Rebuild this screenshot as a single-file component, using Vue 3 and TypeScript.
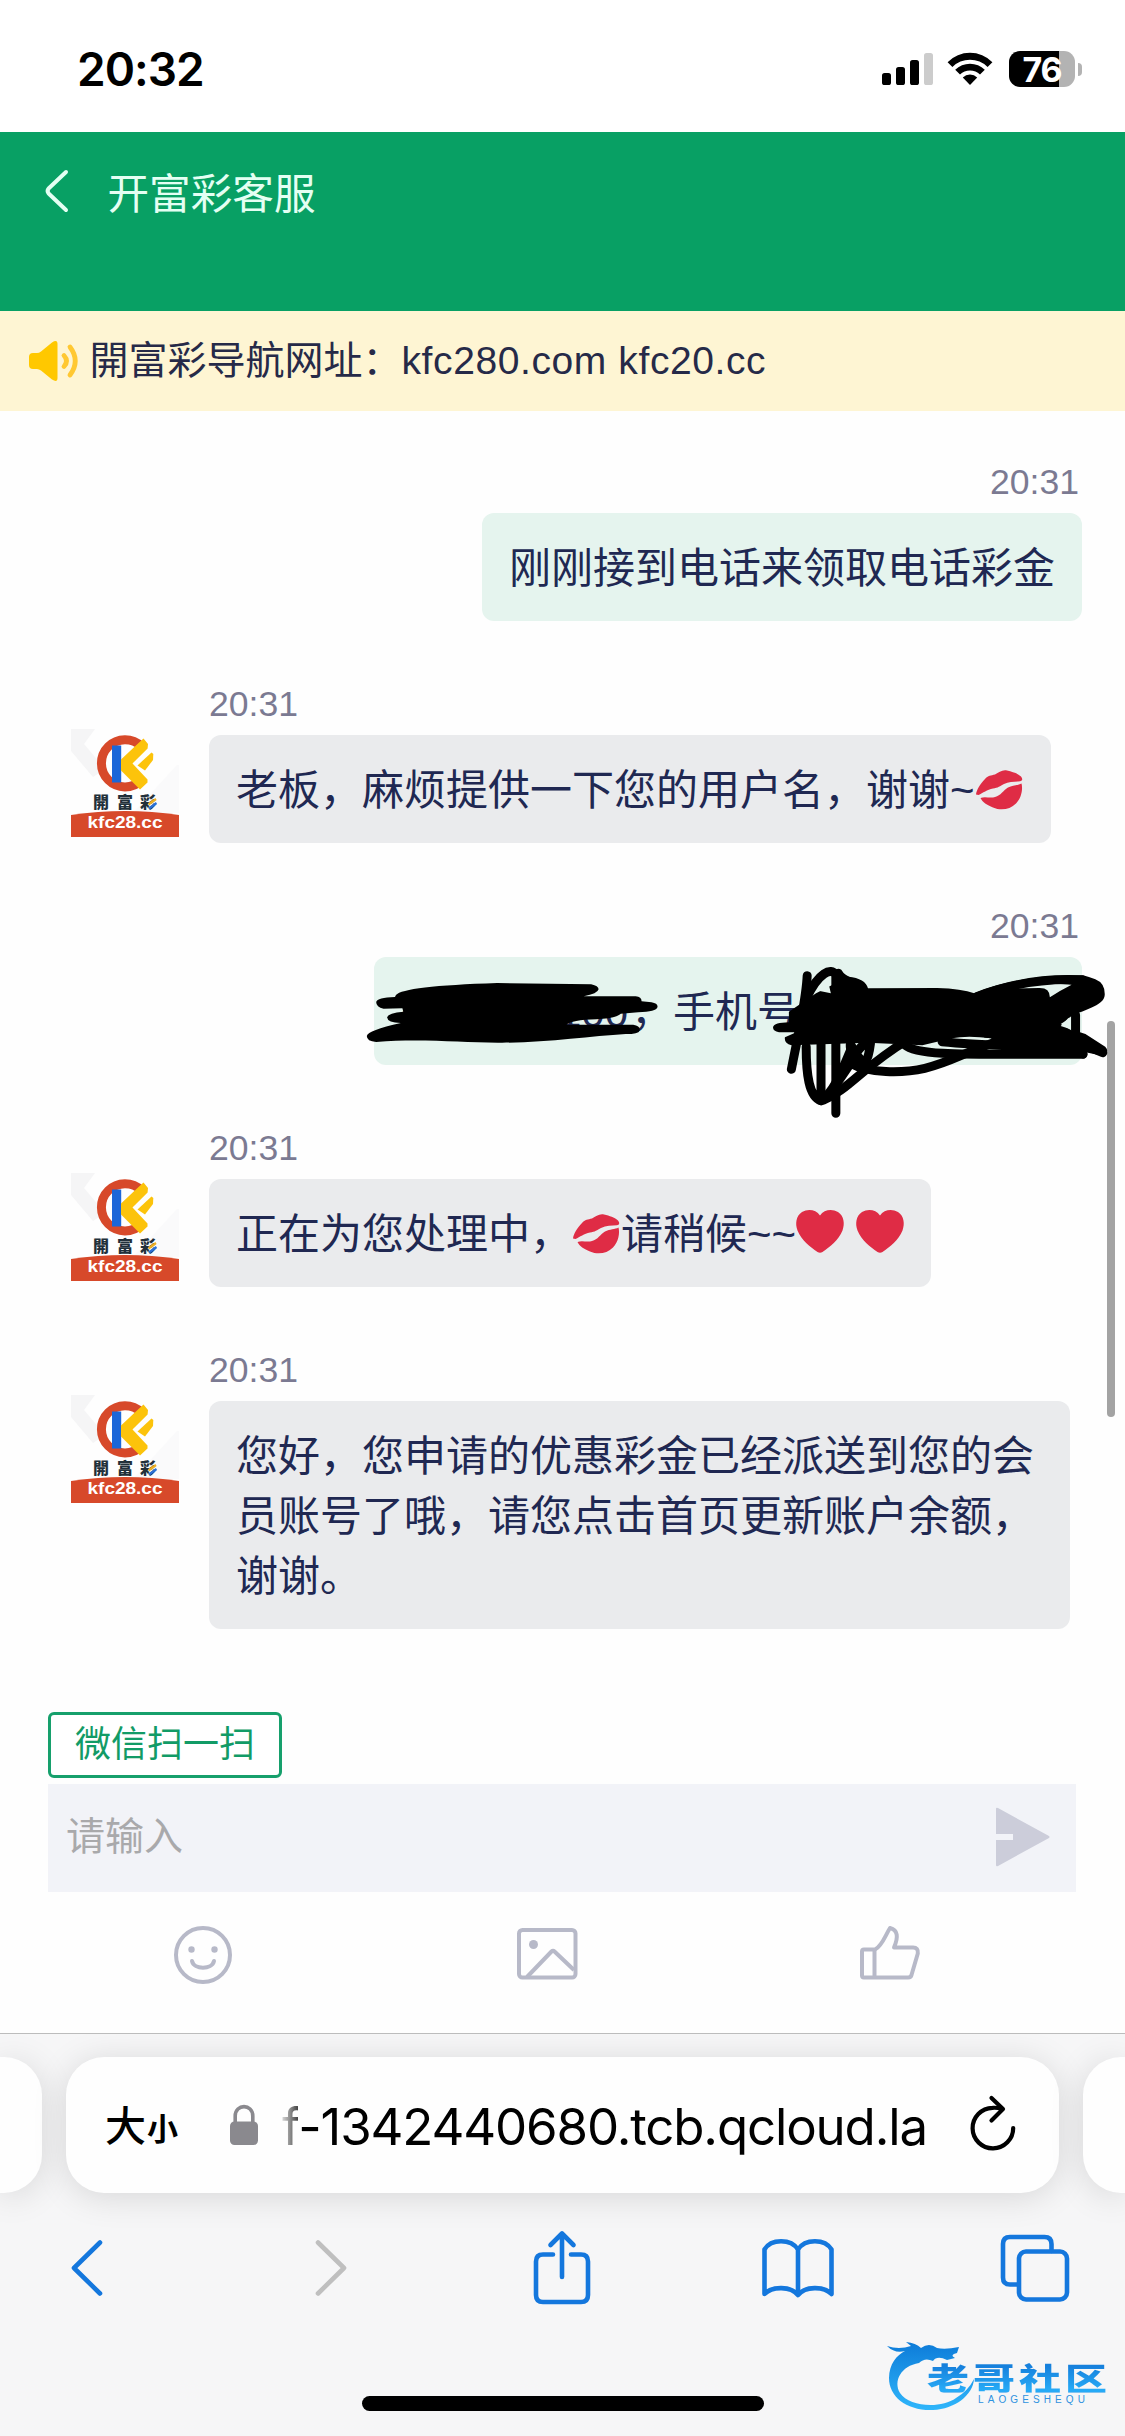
<script setup lang="ts">
type Part = { kind: 'text' | 'kiss' | 'heart' | 'gap' | 'masked'; value?: string; width?: number }
interface Message {
  id: number
  mine: boolean
  time: string
  parts: Part[]
  redacted?: boolean
}

const text = (value: string): Part => ({ kind: 'text', value })

const messages: Message[] = [
  { id: 1, mine: true, time: '20:31', parts: [text('刚刚接到电话来领取电话彩金')] },
  { id: 2, mine: false, time: '20:31', parts: [text('老板，麻烦提供一下您的用户名，谢谢~'), { kind: 'kiss' }] },
  {
    id: 3,
    mine: true,
    time: '20:31',
    redacted: true,
    parts: [
      { kind: 'masked', value: 'ow', width: 157 },
      { kind: 'masked', value: '100', width: 73 },
      text('，手机号'),
      { kind: 'gap', width: 256 },
    ],
  },
  {
    id: 4,
    mine: false,
    time: '20:31',
    parts: [text('正在为您处理中，'), { kind: 'kiss' }, text('请稍候~~'), { kind: 'heart' }, { kind: 'gap', width: 12 }, { kind: 'heart' }],
  },
  { id: 5, mine: false, time: '20:31', parts: [text('您好，您申请的优惠彩金已经派送到您的会员账号了哦，请您点击首页更新账户余额，谢谢。')] },
]
</script>

<template>
  <div class="screen">
    <div class="status">
      <span class="clock">20:32</span>
      <div class="status-icons">
        <svg class="signal" width="51" height="32" viewBox="0 0 51 32">
          <rect x="0" y="20" width="9" height="12" rx="2.6" />
          <rect x="14" y="14" width="9" height="18" rx="2.6" />
          <rect x="28" y="7" width="9" height="25" rx="2.6" />
          <rect x="42" y="0" width="9" height="32" rx="2.6" fill="#ccc" />
        </svg>
        <svg class="wifi" width="46" height="34" viewBox="0 0 46 34">
          <path d="M0.6 10.2 A31.5 31.5 0 0 1 45.4 10.2 L40.6 15 A24.8 24.8 0 0 0 5.4 15Z" />
          <path d="M8.2 17.8 A21 21 0 0 1 37.8 17.8 L33 22.6 A14.2 14.2 0 0 0 13 22.6Z" />
          <path d="M15.8 25.6 A10.2 10.2 0 0 1 30.2 25.6 L23 33Z" />
        </svg>
        <div class="battery"><span>76</span></div>
        <div class="battery-cap"></div>
      </div>
    </div>

    <header class="header">
      <svg width="24" height="42" viewBox="0 0 24 42" fill="none" stroke="#e4fff3" stroke-width="4" stroke-linecap="round" stroke-linejoin="round">
        <path d="M21 2 L3.6 18.5 Q1.6 21 3.6 23.5 L21 40" />
      </svg>
      <h1>开富彩客服</h1>
    </header>

    <div class="notice">
      <svg width="50" height="42" viewBox="0 0 50 42" fill="#ffc800">
        <path d="M4 13 H8 Q10 13 12 11.5 L23 2.5 Q28.5 -1 28.5 4 V38 Q28.5 43 23 39.5 L12 30.5 Q10 29 8 29 H4 Q0 29 0 25 V17 Q0 13 4 13Z" />
        <g fill="none" stroke="#ffc832" stroke-width="4.8" stroke-linecap="round">
          <path d="M35 15.5 Q40 21 35 26.5" />
          <path d="M41 7 Q51.500 21 41 35" />
        </g>
      </svg>
      <p>開富彩导航网址：<span>kfc280.com kfc20.cc</span></p>
    </div>

    <main class="chat">
      <div v-for="m in messages" :key="m.id" class="message" :class="{ mine: m.mine }">
        <svg v-if="!m.mine" class="avatar" width="108" height="108" viewBox="0 0 108 108">
          <rect width="108" height="108" fill="#fefefe" />
          <path d="M0 0 H24 L13 15 L34 40 L22 48 L0 22Z" fill="#f5f5f6" />
          <path d="M106 36 L62 84 H108 V36Z" fill="#fafafb" />
          <path d="M70.5 17.4 A23.6 23.6 0 1 0 70.5 51.2" fill="none" stroke="#d7492a" stroke-width="9" />
          <rect x="41" y="16.5" width="9.2" height="37" fill="#1b66d8" />
          <path d="M66.5 15 L72.5 9.500 L77 15 L76.6 19.6 L61.5 34.4 L76.5 50.5 V53.5 L69 60.5 L50 41.5 V30.5Z" fill="#fcc30b" />
          <path d="M66.5 36.4 L80.5 23.5 L82.3 25 L82 31 L74 41.5Z" fill="#fcc30b" />
          <text x="22" y="79" class="brand">開</text>
          <text x="46" y="79" class="brand">富</text>
          <text x="69" y="79" class="brand">彩</text>
          <path d="M77.5 75.5 L85 70" stroke="#f0b020" stroke-width="2.2" />
          <path d="M78 79.5 L85.5 74" stroke="#2a70d8" stroke-width="2.2" />
          <path d="M0 86 Q54 78 108 86 V108 H0Z" fill="#d7492a" />
          <text x="16.5" y="98.8" class="site" textLength="75" lengthAdjust="spacingAndGlyphs">kfc28.cc</text>
        </svg>
        <div class="body">
          <time>{{ m.time }}</time>
          <div class="bubble">
            <template v-for="(p, i) in m.parts" :key="i">
              <svg v-if="p.kind === 'kiss'" class="emoji" width="49" height="42" viewBox="0 0 49 42" fill="#df2c45">
                <path d="M1 25.5 C1.5 21 5 15 10 10 C13 6.5 16 6.5 20 5.5 C24 3.5 27 .5 32 1.5 C38 3 42 4 46 7.5 C48 10 47.5 12 45 12.3 C40 12.8 34 12.5 29 15 C25 17 23 19 18 19.5 C12 20.5 8 24 3.5 26Z" />
                <path d="M5.5 29 C10 27 15 29.5 20 28 C26 26.5 28 21.5 33 18.5 C38 16 43 16.5 46.5 14.5 C48 20 46.5 29 41 34.5 C35 40.5 26 42 18 38.5 C12 36 7.5 33.5 5.5 29Z" />
              </svg>
              <svg v-else-if="p.kind === 'heart'" class="emoji heart" width="48" height="43" viewBox="0 0 48 43" fill="#df2c45">
                <path d="M24 5.5 C28 -.5 36 -1.500 42 2 C48 6 49 13.500 46.500 20.500 C42.500 30 34 37 26.500 42 Q24 43.500 21.500 42 C14 37 5.500 30 1.500 20.500 C-1 13.500 0 6 6 2 C12 -1.500 20 -.5 24 5.500Z" />
              </svg>
              <span v-else-if="p.kind === 'text'">{{ p.value }}</span>
              <span v-else class="fixed" :style="{ width: p.width + 'px' }">{{ p.value }}</span>
            </template>
            <svg v-if="m.redacted" class="scribble" width="775" height="240" viewBox="0 0 1568 720" preserveAspectRatio="none">
              <g class="filled">
                <path d="M95 285 Q110 258 300 249 L490 253 Q505 258 505 268 Q503 281 475 289 L580 289 Q592 290 592 304 L612 307 Q626 311 624 322 Q622 335 585 337 L550 341 Q540 355 500 358 Q450 360 440 374 L575 374 Q590 377 588 392 Q586 402 560 402 C490 408 400 428 310 428 C230 429 150 415 55 426 Q36 424 36 408 Q38 391 105 369 Q78 369 77 352 Q80 338 110 335 L108 325 L70 326 Q55 322 55 306 Q57 293 93 291Z" />
                <path d="M890 335 L945 280 L1010 230 Q1045 235 1050 265 L1190 264 Q1240 266 1265 280 C1320 245 1400 223 1485 226 Q1500 232 1510 238 Q1530 250 1529 285 C1528 320 1480 330 1455 355 L1440 378 L1490 402 L1530 440 Q1540 455 1525 467 L1495 458 L1440 440 L1290 438 L1300 415 Q1250 405 1220 415 L1160 436 L1050 428 L895 436 Q880 430 882 412 L905 397 L870 397 Q857 393 858 381 Q860 368 890 367Z" />
              </g>
              <g class="cut">
                <path d="M1330 268 Q1380 250 1440 252 L1462 254 Q1440 270 1418 292 Q1418 262 1395 264 Q1360 264 1330 268Z" />
                <path d="M1440 372 L1463 350 L1463 392Z" />
                <path d="M950 272 L968 238 L975 280Z" />
              </g>
              <g class="strokes">
                <path d="M927 227 C925 300 912 380 895 508" />
                <path d="M927 290 C950 220 975 200 985 225 L985 640" />
                <path d="M925 440 C925 520 930 590 955 602 L955 430" />
                <path d="M955 602 C985 570 1000 500 1015 450 C1010 400 1020 470 1045 490" />
                <path d="M960 600 C1010 570 1040 500 1130 420" />
                <path d="M1000 500 C1040 440 1035 430 1055 430 C1050 490 1045 490 1025 485" />
                <path d="M985 555 L1015 490 C1050 520 1120 520 1165 505 C1220 485 1240 460 1310 425" />
                <path d="M1125 435 C1150 470 1260 462 1485 463" />
                <path d="M1200 425 C1300 440 1400 435 1485 450" />
                <path d="M1470 345 L1470 405 L1485 462" />
                <path d="M990 220 C1000 250 1030 240 1040 290" />
                <path d="M1270 290 C1340 250 1410 234 1485 240" />
                <path d="M1290 400 C1350 410 1440 400 1525 458" />
              </g>
            </svg>
          </div>
        </div>
      </div>
      <div class="scrollbar"></div>
    </main>

    <section class="composer">
      <button class="quick">微信扫一扫</button>
      <div class="input">
        <span>请输入</span>
        <svg width="54" height="60" viewBox="0 0 54 60" fill="#cccdda">
          <path d="M0 2 Q0 0 2 1 L53 29 Q54 30 53 31 L2 59 Q0 60 0 58 V33 H17 V27 H0Z" />
        </svg>
      </div>
      <div class="tools">
        <svg width="60" height="60" viewBox="0 0 60 60" fill="none" stroke="#b7b9c8" stroke-width="4" stroke-linecap="round">
          <circle cx="30" cy="30" r="27" />
          <path d="M19 36 C21 45 39 45 41 36" />
          <circle cx="18.500" cy="24.500" r="3.200" fill="#b7b9c8" stroke="none" />
          <circle cx="41.500" cy="24.500" r="3.200" fill="#b7b9c8" stroke="none" />
        </svg>
        <svg width="60" height="60" viewBox="0 0 60 60" fill="none" stroke="#b7b9c8" stroke-width="4" stroke-linejoin="round">
          <rect x="2" y="5" width="56.500" height="47.500" rx="3.500" />
          <path d="M10 52 L34.500 26.500 Q36 25 37.500 26.500 L57 45" />
          <circle cx="16.500" cy="19.500" r="4.500" fill="#b7b9c8" stroke="none" />
        </svg>
        <svg width="60" height="60" viewBox="0 0 60 60" fill="none" stroke="#b7b9c8" stroke-width="4" stroke-linejoin="round">
          <path d="M4 24.500 H15 C22 21 25 11 30 3 C38 5 38.500 12 34 22.500 H53 Q58.500 22.500 57.800 28.500 L51.500 50 Q51 52.500 48 52.500 H4 Q2 52.500 2 50.500 V26.500 Q2 24.500 4 24.500Z" />
          <path d="M14.500 24.500 V52.500" />
        </svg>
      </div>
    </section>

    <footer class="browser">
      <div class="address-row">
        <div class="tab-edge left"></div>
        <div class="address">
          <span class="big">大</span><span class="small">小</span>
          <svg class="lock" width="28" height="40" viewBox="0 0 28 40">
            <path d="M5.200 18 V11 C5.200 -1.500 22.800 -1.500 22.800 11 V18" fill="none" stroke="#8a898e" stroke-width="3.600" />
            <rect x="0" y="16.500" width="28" height="23.500" rx="4.500" fill="#8a898e" />
          </svg>
          <span class="url"><i>f</i>-1342440680.tcb.qcloud.la</span>
          <svg class="reload" width="46" height="56" viewBox="0 0 46 56" fill="none" stroke="#000" stroke-width="4.200" stroke-linecap="round" stroke-linejoin="round">
            <path d="M32 14 C29 13 25.500 12.600 22.500 12.800 A20.300 20.300 0 1 0 43.200 33" />
            <path d="M21.500 3 L33 14 L21.500 25.500" />
          </svg>
        </div>
        <div class="tab-edge right"></div>
      </div>
      <nav class="nav">
        <svg width="32" height="56" viewBox="0 0 32 56" class="ico"><path d="M29 2.500 L3 28 L29 53.500" /></svg>
        <svg width="32" height="56" viewBox="0 0 32 56" class="ico off"><path d="M3 2.500 L29 28 L3 53.500" /></svg>
        <svg width="56" height="74" viewBox="0 0 56 74" class="ico share">
          <path d="M19 23.500 H9 Q2 23.500 2 30.500 V64 Q2 71 9 71 H47 Q54 71 54 64 V30.500 Q54 23.500 47 23.500 H37" />
          <path d="M28 46 V2.500 M16.500 14 L28 2.500 L39.500 14" />
        </svg>
        <svg width="72" height="60" viewBox="0 0 72 60" class="ico book">
          <path d="M36 11.500 C29 .5 9 .5 2.500 11.500 V56 C10 48 29 48 36 57 C43 48 62 48 69.500 56 V11.500 C63 .5 43 .5 36 11.500 V57" />
        </svg>
        <svg width="68" height="67" viewBox="0 0 68 67" class="ico tabs">
          <path d="M16 49.500 H9 Q2 49.500 2 42.500 V9 Q2 2 9 2 H43.500 Q50.500 2 50.500 9 V16" />
          <rect x="18" y="16.500" width="48" height="48" rx="7" />
        </svg>
      </nav>
      <div class="home"></div>
      <div class="watermark">
        <svg width="94" height="70" viewBox="0 0 94 70">
          <defs>
            <linearGradient id="wave" x1="0" y1="0" x2="0" y2="1">
              <stop offset="0" stop-color="#0d7bd8" />
              <stop offset="1" stop-color="#2fb6fb" />
            </linearGradient>
          </defs>
          <path fill="url(#wave)" d="M0 5 Q12 9 24 5 L19 1 Q29 2 34 7 Q42 1 50 7 Q58 9 72 6 L70 12 Q62 14 68 17 L60 19 Q50 14 46 20 Q38 16 32 22 C14 25 6 40 13 52 C22 66 54 68 69 57 Q81 50 87 38 C86 54 68 68 46 69 C20 70 2 56 2 37 C2 23 10 14 18 10 Q8 13 0 5Z" />
        </svg>
        <strong>老哥社区</strong>
        <em>LAOGESHEQU</em>
      </div>
    </footer>
  </div>
</template>

<style>
body {
  margin: 0;
  background: #fefefe;
}
</style>

<style scoped>
.screen {
  width: 1125px;
  height: 2436px;
  overflow: hidden;
  display: flex;
  flex-direction: column;
  background: #fefefe;
  color: #202852;
  font-family: 'Liberation Sans', 'Noto Sans CJK SC', sans-serif;
  text-spacing-trim: space-all;
}
svg {
  display: block;
  flex: none;
  overflow: visible;
}
.status {
  height: 132px;
  flex: none;
  display: flex;
  justify-content: space-between;
  padding: 0 43px 0 77px;
  box-sizing: border-box;
  background: #fff;
}
.clock {
  font: 600 46px/60px Inter, sans-serif;
  color: #000;
  margin-top: 39px;
  letter-spacing: -1px;
}
.status-icons {
  display: flex;
  align-items: center;
  height: 36px;
  margin-top: 51px;
}
.wifi {
  margin-left: 14px;
}
.battery {
  width: 66px;
  height: 36px;
  margin-left: 16px;
  border-radius: 11px;
  background: linear-gradient(90deg, #000 50px, #b3b3b3 50px);
  color: #fff;
  font: 700 34px/37px Inter, sans-serif;
  text-align: center;
  letter-spacing: -1.2px;
}
.battery-cap {
  width: 4px;
  height: 13px;
  margin-left: 3px;
  border-radius: 0 5px 5px 0;
  background: #b3b3b3;
}
.header {
  height: 179px;
  flex: none;
  display: flex;
  align-items: flex-start;
  background: #08a064;
  padding: 38px 0 0 45px;
  box-sizing: border-box;
}
.header h1 {
  margin: -5px 0 0 38.5px;
  font-size: 41.6px;
  line-height: 60px;
  font-weight: 400;
  color: #e4fff3;
}
.notice {
  height: 100px;
  flex: none;
  display: flex;
  align-items: center;
  padding-left: 29px;
  background: #fef5d3;
  color: #262a48;
}
.notice p {
  margin: -1px 0 0 10.5px;
  font-size: 39px;
  line-height: 60px;
}
.notice span {
  letter-spacing: 0.6px;
}
.chat {
  position: relative;
  height: 1301px;
  flex: none;
  box-sizing: border-box;
  padding: 51px 43px 0 71px;
  display: flex;
  flex-direction: column;
  gap: 63px;
}
.message {
  display: flex;
  gap: 30px;
}
.mine {
  justify-content: flex-end;
}
.avatar {
  margin-top: 45px;
}
.brand {
  font: 900 16px 'Noto Sans CJK TC', sans-serif;
  fill: #22303a;
}
.site {
  font: 700 16px 'Liberation Sans', sans-serif;
  fill: #fff;
}
.body {
  display: flex;
  flex-direction: column;
  align-items: flex-start;
  max-width: 861px;
}
.mine .body {
  align-items: flex-end;
}
time {
  font-size: 35.6px;
  line-height: 40px;
  margin-bottom: 11px;
  color: #7b7a92;
}
.mine time {
  margin-right: 3px;
}
.bubble {
  position: relative;
  padding: 26px 27px 22px;
  border-radius: 12px;
  background: #eaebed;
  font-size: 42px;
  line-height: 60px;
}
.mine .bubble {
  background: #e5f4ee;
}
.emoji {
  display: inline-block;
  vertical-align: -6px;
}
.heart {
  vertical-align: -4px;
}
.fixed {
  display: inline-block;
  height: 60px;
  vertical-align: top;
}
.scribble {
  position: absolute;
  left: -25px;
  top: -57px;
  z-index: 1;
}
.filled {
  fill: #000;
}
.cut {
  fill: #e5f4ee;
}
.strokes {
  fill: none;
  stroke: #000;
  stroke-width: 9px;
  stroke-linecap: round;
  stroke-linejoin: round;
}
.strokes path {
  vector-effect: non-scaling-stroke;
}
.scrollbar {
  position: absolute;
  right: 10px;
  top: 610px;
  width: 8.5px;
  height: 396px;
  border-radius: 5px;
  background: #a3a3a3;
}
.composer {
  height: 321px;
  flex: none;
  padding: 0 49px 0 48px;
}
.quick {
  display: block;
  width: 234px;
  height: 66px;
  box-sizing: border-box;
  padding: 0;
  border: 3px solid #16a06c;
  border-radius: 6px;
  background: #fff;
  color: #129b66;
  font: 36px/60px 'Liberation Sans', 'Noto Sans CJK SC', sans-serif;
}
.input {
  display: flex;
  justify-content: space-between;
  align-items: center;
  height: 108px;
  margin-top: 6px;
  padding: 0 26px 0 18px;
  background: #f2f3f8;
  color: #a9a9ab;
  font-size: 39px;
}
.input span {
  line-height: 60px;
  margin-top: -2px;
}
.input svg {
  margin-top: -2px;
}
.tools {
  display: flex;
  justify-content: space-between;
  padding: 33px 156px 0 125px;
}
.browser {
  position: relative;
  flex: 1;
  border-top: 1px solid #bcbcbc;
  background: #f6f6f7;
  overflow: hidden;
}
.address-row {
  display: flex;
  gap: 24px;
  padding-top: 23px;
}
.address,
.tab-edge {
  height: 136px;
  background: #fefefe;
  box-shadow: 0 4px 34px rgba(0, 0, 0, 0.13);
}
.tab-edge {
  width: 42px;
  flex: none;
}
.left {
  border-radius: 0 38px 38px 0;
}
.right {
  border-radius: 38px 0 0 38px;
}
.address {
  width: 993px;
  flex: none;
  box-sizing: border-box;
  display: flex;
  align-items: center;
  border-radius: 38px;
  padding-left: 39px;
  color: #000;
}
.big {
  font-size: 41px;
  font-weight: 500;
  line-height: 60px;
  margin-top: 3px;
}
.small {
  font-size: 31px;
  font-weight: 700;
  line-height: 60px;
  margin: 10px 0 0 1px;
}
.lock {
  margin-left: 52px;
}
.url {
  width: 645px;
  margin: 3px 0 0 24px;
  font: 400 51px/64px Inter, sans-serif;
  letter-spacing: -1.15px;
  white-space: nowrap;
}
.url i {
  font-style: normal;
  color: transparent;
  background: linear-gradient(90deg, #d8d8d8, #444);
  -webkit-background-clip: text;
  background-clip: text;
}
.reload {
  margin: -5px 0 0 43px;
}
.nav {
  display: flex;
  align-items: center;
  height: 74px;
  padding-left: 71px;
  margin-top: 38px;
}
.ico {
  fill: none;
  stroke: #1477dd;
  stroke-width: 4.6;
  stroke-linecap: round;
  stroke-linejoin: round;
}
.off {
  stroke: #bfbfbf;
  margin-left: 212px;
}
.share {
  margin-left: 187px;
}
.book {
  margin-left: 172px;
}
.tabs {
  margin-left: 167px;
}
.home {
  width: 402px;
  height: 15px;
  margin: 91px auto 0;
  border-radius: 8px;
  background: #000;
}
.watermark {
  position: absolute;
  left: 887px;
  top: 307px;
  width: 230px;
  height: 72px;
}
.watermark strong,
.watermark em {
  position: absolute;
  white-space: nowrap;
}
.watermark strong {
  left: 40px;
  top: 15px;
  font: 900 42px/42px 'Noto Sans CJK SC', sans-serif;
  letter-spacing: 4px;
  transform: scaleY(0.74);
  color: transparent;
  background: linear-gradient(#1680dc 15%, #27aaf6 90%);
  -webkit-background-clip: text;
  background-clip: text;
}
.watermark em {
  left: 91px;
  top: 53px;
  font: 400 10px/11px 'Liberation Sans', sans-serif;
  letter-spacing: 4.1px;
  color: #2f92e0;
}
</style>
